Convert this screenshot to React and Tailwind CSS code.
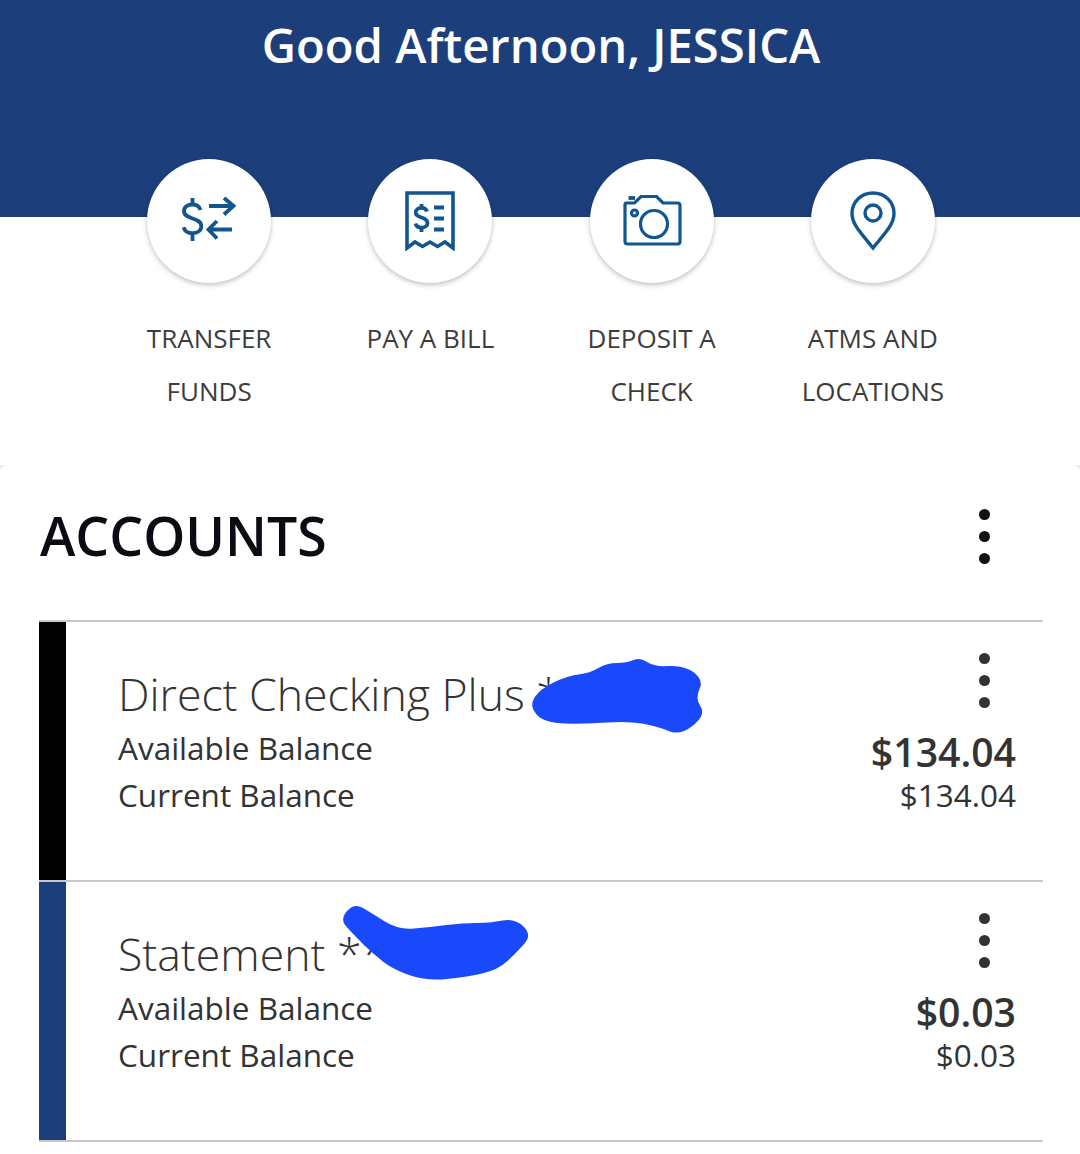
import React from 'react';

const FONT = { fontFamily: '"Open Sans", sans-serif' };

const TransferIcon = () => (
  <svg className="mt-[-2px] -ml-[2px]" width="56" height="48" viewBox="0 0 56 48" fill="none" stroke="#11568f" strokeWidth="3.800">
    <path d="M20.500 14c-1.200-4-4.200-5.500-8-5.500-5 0-8.500 2.700-8.500 6.600 0 4.300 3.600 5.800 8.500 7.400 5.200 1.700 8.800 3.300 8.800 7.800 0 4.200-3.700 6.900-8.800 6.900-4.300 0-7.800-1.800-8.800-6" />
    <path d="M12.500 2v6.500M12.500 38v7" />
    <path d="M29 10h24M44 2l9.500 8-9.500 8.500" />
    <path d="M52 33.500H29M37 25l-8.500 8.500 8.500 9" />
  </svg>
);

const BillIcon = () => (
  <svg width="50" height="60" viewBox="0 0 50 60" fill="none" stroke="#11568f">
    <path d="M2 57V2h46v55l-8-6-7.500 4.500-7.500-4.500-7.500 4.500-7.500-4.500z" strokeWidth="3.600" />
    <path d="M22 20.500c-.8-2.600-2.800-3.600-5.500-3.600-3.500 0-5.800 1.900-5.800 4.600 0 3 2.500 4 5.800 5 3.600 1.200 6 2.300 6 5.400 0 2.900-2.500 4.700-6 4.700-3 0-5.300-1.200-6-4.100" strokeWidth="3.800" />
    <path d="M16.500 13v4M16.500 37v4M29 16.500h10M29 27.500h10M29 38.500h10" strokeWidth="3.800" />
  </svg>
);

const CameraIcon = () => (
  <svg width="60" height="54" viewBox="0 0 60 54" fill="none" stroke="#11568f" strokeWidth="3.200">
    <path d="M4 9h8.500l6.500-6.500h15.500L41 9h14.500c1.500 0 2.500 1 2.500 2.500v36c0 1.500-1 2.500-2.500 2.500h-50C4 50 3 49 3 47.500V11c0-1 .2-2 1-2z" />
    <circle cx="32" cy="30" r="13.500" />
    <circle cx="12.500" cy="19" r="3" />
    <path d="M6.500 4h6.500" strokeWidth="3.800" />
  </svg>
);

const PinIcon = () => (
  <svg width="46" height="60" viewBox="0 0 46 60" fill="none" stroke="#11568f" strokeWidth="3.400">
    <path d="M23 57C12 43 2 34 2 22.500 2 10.500 11.500 2 23 2s21 8.500 21 20.500C44 34 34 43 23 57z" />
    <circle cx="23" cy="22" r="8" />
  </svg>
);

const actions = [
  { label: ['TRANSFER', 'FUNDS'], icon: <TransferIcon /> },
  { label: ['PAY A BILL'], icon: <BillIcon /> },
  { label: ['DEPOSIT A', 'CHECK'], icon: <CameraIcon /> },
  { label: ['ATMS AND', 'LOCATIONS'], icon: <PinIcon /> },
];

const Dots = ({ color }) => (
  <div className="flex flex-col gap-[11px]">
    {[0, 1, 2].map((i) => (
      <span key={i} className={`block w-[11px] h-[11px] rounded-full ${color}`} />
    ))}
  </div>
);

// closed smooth outline through the midpoints of the traced points
const smooth = (pts) => {
  const mid = (a, b) => [(a[0] + b[0]) / 2, (a[1] + b[1]) / 2];
  let d = `M${mid(pts[pts.length - 1], pts[0]).join(' ')}`;
  pts.forEach((p, i) => {
    const m = mid(p, pts[(i + 1) % pts.length]);
    d += `Q${p.join(' ')} ${m.join(' ')}`;
  });
  return d + 'Z';
};

const blobOnePts = [[-3, 46], [8, 29], [35, 16], [58, 13], [75, 3], [95, 3], [108, -3], [122, 7], [152, 5], [172, 20], [163, 38], [174, 55], [148, 76], [125, 66], [95, 61], [55, 64], [12, 63]];
const blobTwoPts = [[-3, 12], [11, -4], [27, 5], [55, 23], [87, 20], [120, 16], [147, 16], [172, 11], [189, 28], [175, 44], [155, 63], [123, 70], [84, 74], [51, 63], [30, 47], [8, 25]];

const AccountRow = ({ name, stripe, available, current, blob }) => (
  <div className="relative flex h-[260px] border-t-2 border-[#c9c9c9]">
    <div className={`w-[27px] shrink-0 ${stripe}`} />
    <div className="flex-1 flex justify-between pl-[52px] pr-[27px] pt-[43px]">
      <div className="text-[#333]">
        <div className="text-[44.600px] leading-[58px] font-light whitespace-nowrap">{name}</div>
        <div className="text-[31.500px] leading-[47px] mt-[1px]">Available Balance</div>
        <div className="text-[31.500px] leading-[47px]">Current Balance</div>
      </div>
      <div className="flex flex-col items-end text-[#333] -mt-[12px]">
        <div className="pr-[26px]"><Dots color="bg-[#333]" /></div>
        <div className="text-[39.200px] leading-[47px] font-semibold mt-[20px]">{available}</div>
        <div className="text-[31.500px] leading-[40px]">{current}</div>
      </div>
    </div>
    {blob}
  </div>
);

const Blob = ({ pts, className }) => (
  <svg className={`absolute overflow-visible ${className}`} width="172" height="74">
    <path d={smooth(pts)} fill="#1a49fb" />
  </svg>
);

export default function App() {
  return (
    <div className="w-[1080px] h-[1154px] overflow-hidden bg-white flex flex-col" style={FONT}>
      {/* Blue header band, action circles hang over its bottom edge */}
      <div className="h-[217px] shrink-0 bg-[#1c3f7c] pt-[16px]">
        <h1 className="text-center text-white text-[47.200px] leading-[58px] font-semibold pl-[2px]">
          Good Afternoon, JESSICA
        </h1>
      </div>

      <div className="grid grid-cols-4 w-[885px] ml-[98.500px] -mt-[58px] h-[306px] shrink-0">
        {actions.map((a) => (
          <div key={a.label[0]} className="flex flex-col items-center">
            <div className="w-[124px] h-[124px] rounded-full bg-white flex items-center justify-center shadow-[0_2px_5px_rgba(0,0,0,0.25)]">
              {a.icon}
            </div>
            <div className="mt-[29px] text-center text-[26px] leading-[53px] text-[#3c3c3c] whitespace-nowrap">
              {a.label.map((line) => (
                <div key={line}>{line}</div>
              ))}
            </div>
          </div>
        ))}
      </div>

      {/* Accounts card: only its rounded top corners show against the page */}
      <div className="flex-1 bg-[#eeeeee]">
        <div className="h-full rounded-t-[8px] bg-white pt-[13px] pl-[39px] pr-[37px]">
          <div className="flex justify-between items-center h-[142px] pb-[26px]">
            <h2 className="text-[53.500px] leading-[70px] font-semibold text-[#0b0b14] pl-[1px]">ACCOUNTS</h2>
            <div className="pr-[53px]"><Dots color="bg-[#111]" /></div>
          </div>
          <AccountRow
            name="Direct Checking Plus *"
            stripe="bg-black"
            available="$134.04"
            current="$134.04"
            blob={<Blob pts={blobOnePts} className="left-[493px] top-[38px]" />}
          />
          <AccountRow
            name="Statement **"
            stripe="bg-[#1c3f7c]"
            available="$0.03"
            current="$0.03"
            blob={<Blob pts={blobTwoPts} className="left-[304px] top-[25px]" />}
          />
          <div className="border-t-2 border-[#c9c9c9]" />
        </div>
      </div>
    </div>
  );
}
